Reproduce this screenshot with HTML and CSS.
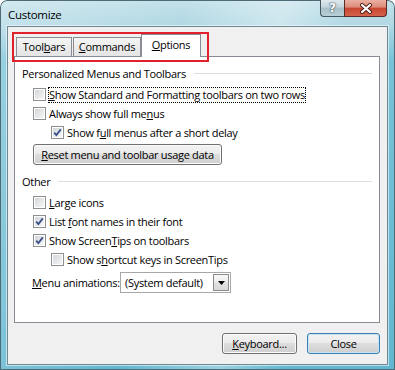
FILE: index.html
```html
<!DOCTYPE html>
<html lang="en">
<head>
    <meta charset="UTF-8">
    <title>Customize</title>
    <link rel="stylesheet" href="styles.css">
</head>
<body>
    <div class="window">
        <div class="titlebar">
            <span class="title">Customize</span>
            <div class="caption">
                <div class="cap-btn cap-help">?</div>
                <div class="cap-btn cap-close">
                    <svg width="14" height="11" viewBox="0 0 14 11">
                        <path d="M3 2 L11 9 M11 2 L3 9" stroke="#4a1d15" stroke-width="4" stroke-linecap="round"/>
                        <path d="M3 2 L11 9 M11 2 L3 9" stroke="#ffffff" stroke-width="2.2" stroke-linecap="round"/>
                    </svg>
                </div>
            </div>
        </div>

        <div class="client">
            <div class="tab-strip">
                <div class="tab tab-toolbars">Tool<u>b</u>ars</div>
                <div class="tab tab-commands"><u>C</u>ommands</div>
                <div class="tab tab-options selected"><u>O</u>ptions</div>
            </div>

            <div class="panel">
                <div class="group-head">
                    <span>Personalized Menus and Toolbars</span>
                    <span class="rule"></span>
                </div>
                <div class="check">
                    <span class="box"></span>
                    <span class="label focus"><u>S</u>how Standard and Formatting toolbars on two rows</span>
                </div>
                <div class="check">
                    <span class="box"></span>
                    <span class="label">Always show full me<u>n</u>us</span>
                </div>
                <div class="check indent">
                    <span class="box checked">
                        <svg width="9" height="9" viewBox="0 0 9 9"><path d="M1.2 4.6 L3.4 7 L7.8 1.4" fill="none" stroke="#3b4f8a" stroke-width="1.8"/></svg>
                    </span>
                    <span class="label">Show f<u>u</u>ll menus after a short delay</span>
                </div>
                <button class="btn btn-reset"><u>R</u>eset menu and toolbar usage data</button>

                <div class="group-head group-other">
                    <span>Other</span>
                    <span class="rule"></span>
                </div>
                <div class="check">
                    <span class="box"></span>
                    <span class="label"><u>L</u>arge icons</span>
                </div>
                <div class="check">
                    <span class="box checked">
                        <svg width="9" height="9" viewBox="0 0 9 9"><path d="M1.2 4.6 L3.4 7 L7.8 1.4" fill="none" stroke="#3b4f8a" stroke-width="1.8"/></svg>
                    </span>
                    <span class="label">List <u>f</u>ont names in their font</span>
                </div>
                <div class="check">
                    <span class="box checked">
                        <svg width="9" height="9" viewBox="0 0 9 9"><path d="M1.2 4.6 L3.4 7 L7.8 1.4" fill="none" stroke="#3b4f8a" stroke-width="1.8"/></svg>
                    </span>
                    <span class="label">Show Screen<u>T</u>ips on toolbars</span>
                </div>
                <div class="check indent">
                    <span class="box"></span>
                    <span class="label">Show s<u>h</u>ortcut keys in ScreenTips</span>
                </div>

                <div class="combo-row">
                    <span class="combo-label"><u>M</u>enu animations:</span>
                    <div class="combo">
                        <span class="combo-text">(System default)</span>
                        <span class="combo-arrow">
                            <svg width="7" height="4" viewBox="0 0 7 4"><path d="M0 0 H7 L3.5 4 Z" fill="#000"/></svg>
                        </span>
                    </div>
                </div>
            </div>

            <div class="footer">
                <button class="btn btn-keyboard"><u>K</u>eyboard...</button>
                <button class="btn btn-close default">Close</button>
            </div>
        </div>

        <div class="highlight"></div>
    </div>
</body>
</html>
```

FILE: styles.css
```css
body {
    margin: 0;
    font-family: "Open Sans", "Noto Sans", sans-serif;
    font-size: 11px;
    letter-spacing: -0.3px;
    color: #000;
}
u {
    text-decoration: underline;
    text-underline-offset: 1px;
}
.window {
    position: relative;
    width: 395px;
    height: 370px;
    box-sizing: border-box;
    padding: 0 7px 5px 7px;
    display: flex;
    flex-direction: column;
    border-radius: 7px 7px 0 0;
    overflow: hidden;
    background:
        linear-gradient(100deg, rgba(255, 255, 255, 0.25) 0%, rgba(255, 255, 255, 0) 40%, rgba(255, 255, 255, 0.35) 62%, rgba(255, 255, 255, 0) 76%),
        linear-gradient(to bottom, #c4e1ea 0px, #b0d8e4 26px, #78c2d8 60px, #62b7d0 100%);
    box-shadow: inset 0 0 0 1px #4d6b77;
}
.titlebar {
    height: 26px;
    flex-shrink: 0;
    display: flex;
    align-items: flex-start;
}
.title {
    margin-left: 1px;
    line-height: 29px;
    font-size: 11.5px;
    color: #000;
}
.caption {
    margin-left: auto;
    margin-right: 1px;
    display: flex;
}
.cap-btn {
    height: 17px;
    box-sizing: border-box;
    border: 1px solid #42565f;
    border-top: none;
    display: flex;
    align-items: center;
    justify-content: center;
}
.cap-help {
    width: 24px;
    border-right: none;
    border-radius: 0 0 0 4px;
    background: linear-gradient(#dfe9ed 0%, #c3d5dc 45%, #a8c0ca 50%, #b9cfd7 100%);
    color: #fff;
    font-family: "DejaVu Sans", sans-serif;
    font-weight: bold;
    font-size: 12px;
    letter-spacing: 0;
    text-shadow: 0 0 2px #2f444d, 0 0 1px #2f444d;
}
.cap-close {
    width: 43px;
    border-color: #5b2a22;
    border-radius: 0 0 4px 0;
    background: linear-gradient(#eab0a3 0%, #dc8b79 45%, #c7452f 50%, #d4634c 100%);
}
.client {
    flex: 1;
    border: 1px solid #6d8793;
    background: #f0f0f0;
    padding: 8px 7px 0 6px;
    display: flex;
    flex-direction: column;
    box-shadow: 0 0 0 1px rgba(255, 255, 255, 0.55);
}
.tab-strip {
    height: 21px;
    margin-left: 2px;
    display: flex;
    align-items: flex-end;
}
.tab {
    height: 19px;
    box-sizing: border-box;
    border: 1px solid #898c95;
    border-bottom: none;
    background: linear-gradient(#f4f4f4, #e4e4e4);
    display: flex;
    align-items: center;
    justify-content: center;
    padding-bottom: 1px;
}
.tab-toolbars {
    width: 56px;
    margin-right: 1px;
}
.tab-commands {
    width: 68px;
}
.tab-options {
    width: 60px;
}
.tab.selected {
    position: relative;
    z-index: 1;
    height: 23px;
    margin-bottom: -1px;
    background: #fff;
    padding-bottom: 3px;
}
.panel {
    height: 267px;
    box-sizing: border-box;
    border: 1px solid #898c95;
    background: #fff;
    padding: 8px 7px 0 7px;
}
.group-head {
    height: 17px;
    display: flex;
    align-items: center;
    margin-bottom: 3px;
}
.group-other {
    margin-top: 8px;
}
.rule {
    flex: 1;
    height: 1px;
    margin-left: 8px;
    background: #dcdfe2;
}
.check {
    height: 19px;
    display: flex;
    align-items: center;
    margin-left: 11px;
}
.check.indent {
    margin-left: 29px;
}
.box {
    width: 13px;
    height: 13px;
    box-sizing: border-box;
    border: 1px solid #8e8f8f;
    padding: 1px;
    margin-right: 2px;
    background: #fff;
    display: flex;
}
.box::before {
    content: "";
    flex: 1;
    background: linear-gradient(135deg, #d3d6da, #f6f7f8);
}
.box.checked {
    position: relative;
}
.box.checked svg {
    position: absolute;
    left: 1px;
    top: 1px;
}
.label {
    border: 1px dotted transparent;
    line-height: 14px;
}
.label.focus {
    border-color: #000;
}
.btn {
    font-family: inherit;
    font-size: 11px;
    letter-spacing: -0.3px;
    color: #000;
    height: 21px;
    padding: 0 0 1px 0;
    box-sizing: border-box;
    border: 1px solid #707070;
    border-radius: 3px;
    background: linear-gradient(#f2f2f2 0%, #ebebeb 50%, #dddddd 50%, #cfcfcf 100%);
    box-shadow: inset 0 0 0 1px #fbfbfb;
}
.btn-reset {
    display: block;
    width: 189px;
    margin: 2px 0 0 11px;
}
.combo-row {
    display: flex;
    align-items: center;
    margin: 3px 0 0 10px;
}
.combo-label {
    width: 88px;
}
.combo {
    width: 111px;
    height: 21px;
    box-sizing: border-box;
    border: 1px solid #a5a7ab;
    background: #fff;
    display: flex;
    align-items: center;
}
.combo-text {
    flex: 1;
    padding-left: 4px;
}
.combo-arrow {
    width: 16px;
    height: 17px;
    box-sizing: border-box;
    margin-right: 1px;
    border: 1px solid #8c8c8c;
    background: linear-gradient(#f6f6f6 0%, #eeeeee 50%, #e2e2e2 50%, #d8d8d8 100%);
    display: flex;
    align-items: center;
    justify-content: center;
}
.footer {
    display: flex;
    justify-content: flex-end;
    gap: 10px;
    margin-top: 10px;
}
.btn-keyboard {
    width: 75px;
}
.btn-close {
    width: 73px;
}
.btn.default {
    border-color: #3c7fb1;
    box-shadow: inset 0 0 0 1px #c3e6f7;
}
.highlight {
    position: absolute;
    left: 12px;
    top: 32px;
    width: 197px;
    height: 30px;
    box-sizing: border-box;
    border: 2px solid #e2202b;
    pointer-events: none;
}
```
